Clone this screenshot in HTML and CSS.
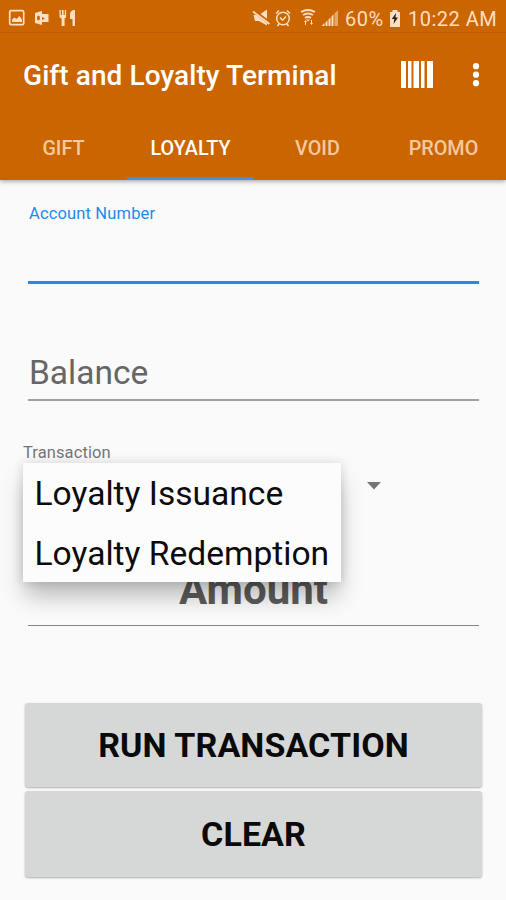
FILE: index.html
```html
<!DOCTYPE html>
<html lang="en">
<head>
<meta charset="utf-8">
<title>Gift and Loyalty Terminal</title>
<link rel="stylesheet" href="styles.css">
</head>
<body>
<header class="header">
  <div class="status">
    <svg class="status-left" width="90" height="33" viewBox="0 0 90 33">
      <rect x="9.7" y="10.700" width="14" height="14" rx="1.500" fill="none" stroke="currentColor" stroke-width="1.700"/>
      <path d="M12 22v-2.500l2.500-2 2 1.500 3-3 2.500 3.500V22z"/>
      <path fill-rule="evenodd" d="M35 13l7-2v14l-7-2zM38.500 15.500a1.500 2.500 0 1 0 0 5 1.500 2.500 0 0 0 0-5z"/>
      <path d="M42 14h6.500v8H42v-2l3-1.500-3-1.500z"/>
      <path d="M59.500 10h1.300v5h1.200v-5h1.600v5h1.200v-5h1.300v6c0 1.500-.7 2-1.500 2.500V26h-3v-7.500c-1.400-.5-2.100-1-2.100-2.500zM75 10v16h-2.500v-7H70v-4c0-3 1.500-5 5-5z"/>
    </svg>
    <svg class="status-icons" width="88" height="33" viewBox="252 0 88 33">
      <path d="M253.500 15h5.500l8-5.500v16L259 21h-4z"/>
      <path d="M253 10.500l17 13" fill="none" stroke="#cb6500" stroke-width="3.500"/>
      <path d="M253 11.500l16.500 12.500" fill="none" stroke="currentColor" stroke-width="1.800"/>
      <g fill="none" stroke="currentColor" stroke-width="1.500">
        <circle cx="283" cy="18.500" r="6.300"/>
        <path d="M276 13.500l3-3M290 13.500l-3-3M280 17.500l2.500 2.700 3.500-3.700M279 24l-1.500 2M287 24l1.500 2"/>
      </g>
      <g fill="none" stroke="currentColor" stroke-width="2">
        <path d="M301 12q7-4 14 0M303 15q5-3 10 0M305 18q3-2 6 0"/>
      </g>
      <path d="M306 19.500h4L308 21.500zM304 22l1.500-2 1.500 2h-1v3h-1v-3zM310 23h1v-3h1v3h1l-1.500 2z"/>
      <path d="M321.500 26l3-3V26zM325.500 22.500l2-2V26h-2zM328.500 19.500l2-2V26h-2zM331.500 16.500l2-2V26h-2z"/>
      <path opacity=".55" d="M334.500 13.500l3.500-3.500V26h-3.500z"/>
    </svg>
    <span class="percent">60%</span>
    <svg class="battery" width="12" height="17" viewBox="0 0 12 17">
      <path d="M3.500 0h5v2H11v15H1V2h2.500z"/>
      <path d="M7 3L2.800 9h2.500l-.8 5L9 7.500H6.500z" fill="#272018"/>
    </svg>
    <span class="clock">10:22 AM</span>
  </div>
  <div class="toolbar">
    <h1 class="title">Gift and Loyalty Terminal</h1>
    <svg class="barcode" width="32" height="27" viewBox="0 0 32 27">
      <path d="M0 0h5v27H0zM7 0h3.500v27H7zM12.500 0h5.500v27h-5.500zM20 0h3.500v27H20zM26 0h6v27h-6z"/>
    </svg>
    <svg class="more" width="8" height="24" viewBox="0 0 8 24">
      <circle cx="4" cy="3.200" r="3.100"/><circle cx="4" cy="11.700" r="3.100"/><circle cx="4" cy="20.200" r="3.100"/>
    </svg>
  </div>
  <nav class="tabs">
    <span class="tab">GIFT</span>
    <span class="tab tab-active">LOYALTY</span>
    <span class="tab">VOID</span>
    <span class="tab">PROMO</span>
  </nav>
</header>
<main class="form">
  <div class="field account"><span class="account-label">Account Number</span></div>
  <div class="field balance"><span class="balance-label">Balance</span></div>
  <div class="transaction">
    <span class="transaction-label">Transaction</span>
    <svg class="arrow" width="14" height="8" viewBox="0 0 14 8"><path d="M0 0h14L7 7.500z"/></svg>
    <div class="menu">
      <div class="option">Loyalty Issuance</div>
      <div class="option">Loyalty Redemption</div>
    </div>
  </div>
  <div class="field amount"><span class="amount-label">Amount</span></div>
  <div class="actions">
    <button class="button run">RUN TRANSACTION</button>
    <button class="button clear">CLEAR</button>
  </div>
</main>
</body>
</html>
```
FILE: styles.css
```css
* { box-sizing: border-box; }
body {
  margin: 0;
  height: 900px;
  overflow: hidden;
  background: #fafafa;
  font-family: Roboto, "Liberation Sans", sans-serif;
}
svg { display: block; fill: currentColor; flex: none; }
.header {
  height: 180px;
  background: #cb6500;
  color: #fff;
  box-shadow: 0 1px 5px rgba(0, 0, 0, .4);
}
.status {
  height: 33px;
  display: flex;
  align-items: center;
  color: #ffdfc2;
  border-bottom: 1px solid #bd5d00;
  font-size: 20px;
  white-space: nowrap;
}
.status-icons { margin-left: 162px; }
.percent { width: 40px; margin-left: 5px; padding-top: 5px; letter-spacing: .5px; }
.battery { margin: 4px 0 0 4px; }
.clock { margin-left: 7px; padding-top: 5px; letter-spacing: .5px; }
.toolbar { height: 83px; display: flex; align-items: center; padding-left: 23px; }
.title {
  width: 378px;
  margin: 0;
  padding-top: 1px;
  font-size: 28px;
  font-weight: 500;
  letter-spacing: .08px;
  white-space: nowrap;
}
.more { margin-left: 39px; }
.tabs { height: 64px; display: grid; grid-template-columns: repeat(3, 127px) 125px; }
.tab {
  display: flex;
  align-items: center;
  justify-content: center;
  padding-top: 3px;
  color: #f3c9a0;
  font-size: 19.800px;
  font-weight: 500;
  border-bottom: 3px solid transparent;
}
.tab-active { color: #fff; border-color: #4390dc; }
.form { padding: 0 24px; }
.field { margin: 0 4px; width: 451px; }
.account { height: 104px; padding: 24px 0 0 1px; border-bottom: 3px solid #218bec; }
.account-label { display: block; line-height: 20px; font-size: 16.500px; letter-spacing: .15px; color: #218bec; }
.balance { height: 117px; padding: 69px 0 0 1px; border-bottom: 2px solid #a0a0a0; color: #666; }
.balance-label { display: block; line-height: 40px; font-size: 33.500px; }
.transaction { position: relative; height: 164px; padding-top: 42px; color: #757575; }
.transaction-label { display: block; margin-left: -1px; line-height: 20px; font-size: 16.500px; letter-spacing: .1px; }
.arrow { margin: 19px 0 0 343px; }
.menu {
  position: absolute;
  z-index: 1;
  top: 62px;
  left: -1px;
  width: 318px;
  height: 119px;
  background: #fcfcfc;
  color: #0c0c0c;
  box-shadow: 0 16px 22px -2px rgba(0, 0, 0, .26), 0 0 10px rgba(0, 0, 0, .15);
}
.option { height: 59.500px; display: flex; align-items: center; padding: 2px 0 0 11.500px; font-size: 33.600px; white-space: nowrap; }
.amount { height: 61px; border-bottom: 1px solid #858585; text-align: center; color: #5c5c5c; }
.amount-label { font-size: 42px; font-weight: 700; line-height: 50px; }
.actions { display: grid; grid-template-rows: 84px 86px; gap: 4px; padding: 77px 0 0 1px; }
.button {
  width: 457px;
  padding: 0;
  border: 0;
  border-radius: 3px;
  background: #d6d8d7;
  box-shadow: 0 1px 2px rgba(0, 0, 0, .3);
  color: #0a0a0a;
  font: 700 34px Roboto, "Liberation Sans", sans-serif;
  letter-spacing: .1px;
}
```
